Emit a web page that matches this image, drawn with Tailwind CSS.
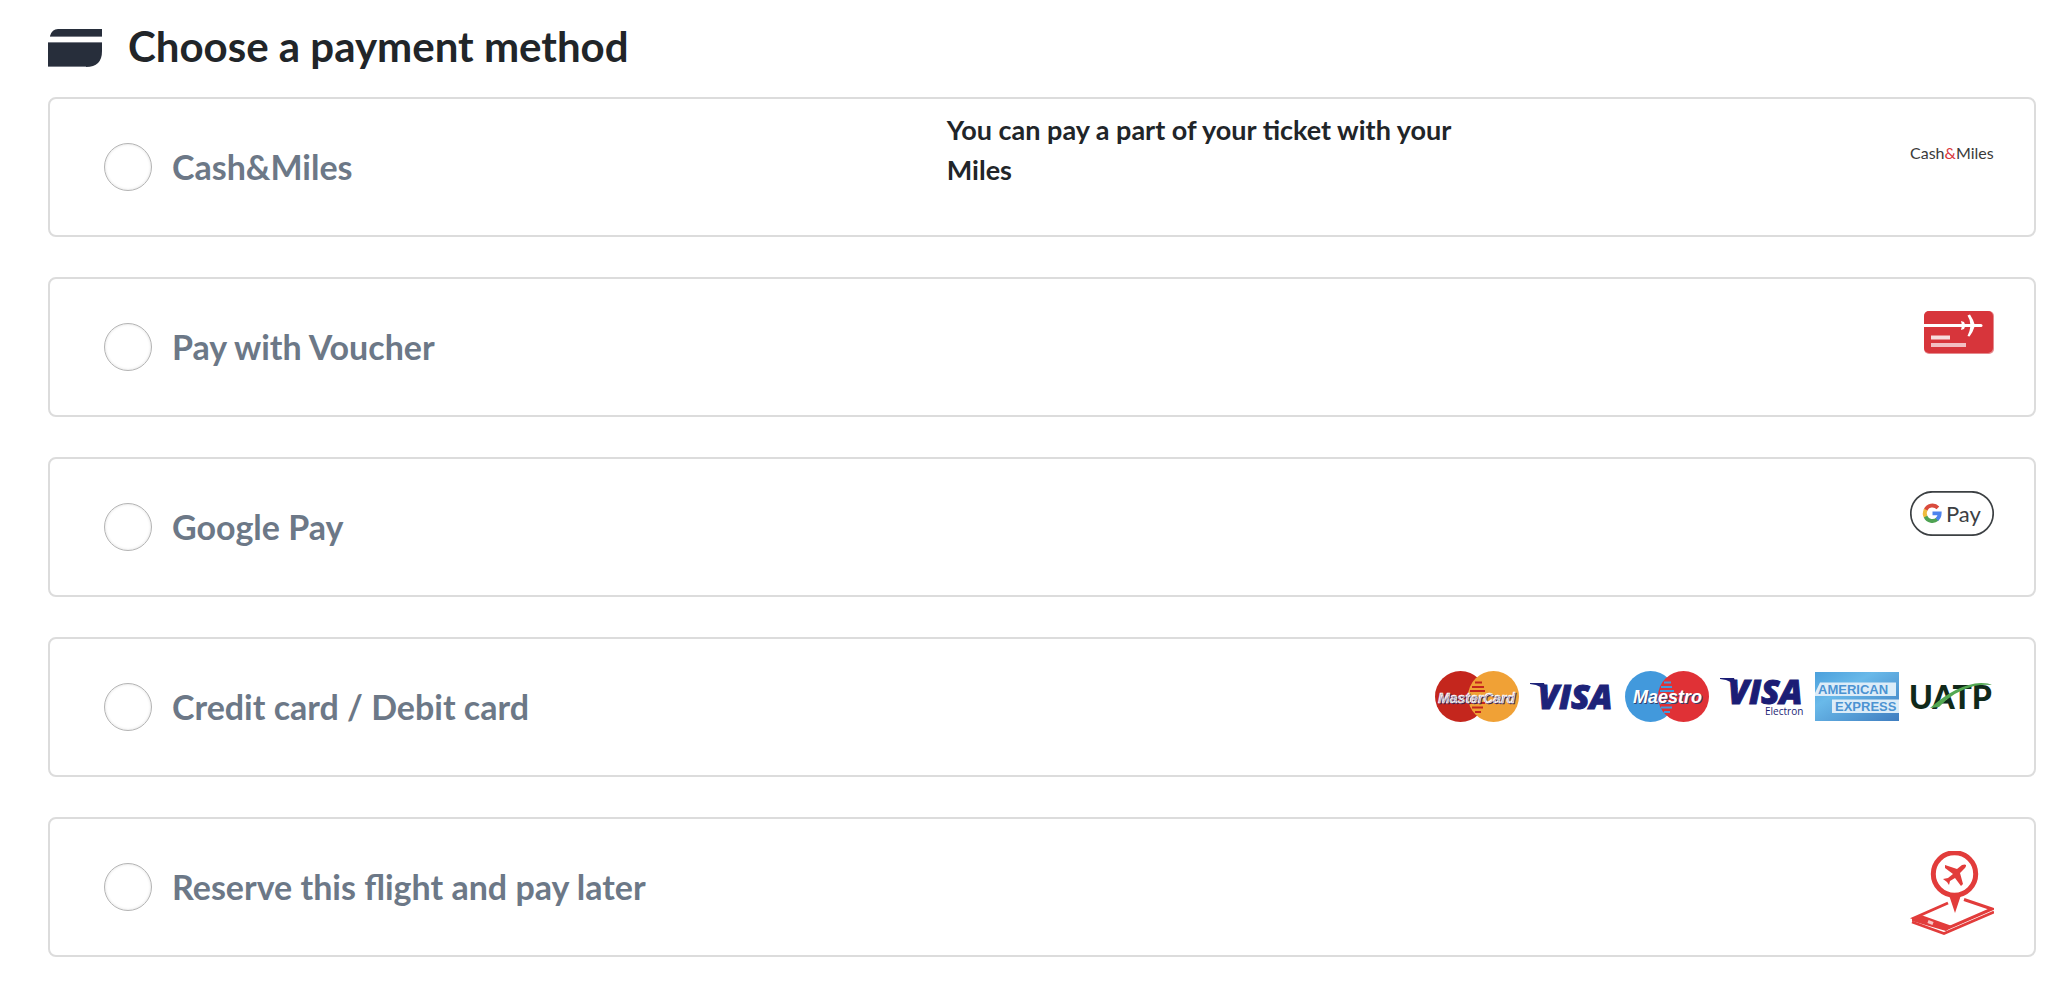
<!DOCTYPE html>
<html lang="en">
<head>
<meta charset="utf-8">
<meta name="viewport" content="width=device-width, initial-scale=1">
<title>Choose a payment method</title>
<script src="https://cdn.jsdelivr.net/npm/@tailwindcss/browser@4"></script>
</head>
<body class="bg-white font-['Lato','Open_Sans',sans-serif] text-[#212529]">
<main class="pt-4 pr-6 pb-7 pl-12">
  <header class="mb-[17px] flex h-16 items-center gap-[26px]">
    <svg class="h-[38px] w-[54px] shrink-0" viewBox="0 0 54 38" fill="#272e3b" aria-hidden="true">
      <path d="M10 0H54V7H2Q4 0 10 0Z"/>
      <path d="M0 14H54V22Q54 38 38 38H0Z"/>
      <path d="M2 7.500H54M0 13.500H54M0 37.500H38" stroke="#777b85" stroke-width="1"/>
    </svg>
    <h1 class="pb-1 text-[42px] leading-[48px] font-bold">Choose a payment method</h1>
  </header>

  <form class="flex flex-col gap-10">
    <section class="flex min-h-[140px] rounded-lg border-2 border-[#dcdcdc]">
      <label for="miles" class="flex w-[45%] items-center gap-5 pl-[54px] text-[34px] leading-10 font-bold text-[#6c7887]">
        <input id="miles" type="radio" name="payment" class="size-12 shrink-0 appearance-none rounded-full border border-[#b4b4b4] bg-white shadow-[inset_0_0_3px_#dddddd] checked:border-[14px] checked:border-[#6c7887]">
        Cash&amp;Miles
      </label>
      <p class="w-[28%] pt-[11px] pl-1 text-[27px] leading-10 font-bold">You can pay a part of your ticket with your Miles</p>
      <div class="ml-auto flex items-start pt-8 pr-10">
        <svg class="h-[44px] w-[84px]" viewBox="0 0 84 44" role="img" aria-label="Cash&amp;Miles">
          <text x="0" y="28" font-family="Lato" font-size="16" fill="#3a3a3a">Cash<tspan fill="#d9363c">&amp;</tspan>Miles</text>
        </svg>
      </div>
    </section>

    <section class="flex min-h-[140px] rounded-lg border-2 border-[#dcdcdc]">
      <label for="voucher" class="flex w-[45%] items-center gap-5 pl-[54px] text-[34px] leading-10 font-bold text-[#6c7887]">
        <input id="voucher" type="radio" name="payment" class="size-12 shrink-0 appearance-none rounded-full border border-[#b4b4b4] bg-white shadow-[inset_0_0_3px_#dddddd] checked:border-[14px] checked:border-[#6c7887]">
        Pay with Voucher
      </label>
      <div class="ml-auto flex items-start pt-8 pr-10">
        <svg class="h-[43px] w-[70px]" viewBox="0 0 70 43" role="img" aria-label="Voucher">
          <rect width="70" height="43" rx="5" fill="#e58a8e"/>
          <rect width="69" height="42" rx="5" fill="#d7353b"/>
          <path d="M0 14.500H57" stroke="#fff" stroke-width="3" stroke-linecap="round"/>
          <path d="M43.500 4.500L46 3.500Q49 8 51 14.500Q49 21 45.500 25.500L43.500 25Q46 20 46.500 14.500Q46.500 9 43.500 4.500ZM37 10L40 11L41.500 14.500L40 18L37 19L38 14.500Z" fill="#fff"/>
          <path d="M7 26.500H26" stroke="#f7dcdd" stroke-width="4"/>
          <path d="M7 34H42" stroke="#f2bfc2" stroke-width="4"/>
        </svg>
      </div>
    </section>

    <section class="flex min-h-[140px] rounded-lg border-2 border-[#dcdcdc]">
      <label for="gpay" class="flex w-[45%] items-center gap-5 pl-[54px] text-[34px] leading-10 font-bold text-[#6c7887]">
        <input id="gpay" type="radio" name="payment" class="size-12 shrink-0 appearance-none rounded-full border border-[#b4b4b4] bg-white shadow-[inset_0_0_3px_#dddddd] checked:border-[14px] checked:border-[#6c7887]">
        Google Pay
      </label>
      <div class="ml-auto flex items-start pt-8 pr-10">
        <svg class="h-[45px] w-[84px]" viewBox="0 0 84 45" role="img" aria-label="Google Pay">
          <rect x="0.800" y="0.800" width="82.400" height="43.400" rx="21.700" fill="#fff" stroke="#3c4043" stroke-width="1.700"/>
          <g fill="none" stroke-width="3.800">
            <path d="M27.900 16.800A7.600 7.600 0 0 0 15.400 19.400" stroke="#d94b3d"/>
            <path d="M15.800 18.600A7.600 7.600 0 0 0 15.800 26.200" stroke="#efbc3e"/>
            <path d="M15.500 25.600A7.600 7.600 0 0 0 27.400 28.100" stroke="#4fa353"/>
            <path d="M26.900 28.500Q29.600 26.200 29.700 22.300H22.500" stroke="#4d84ee"/>
          </g>
          <text x="36" y="31" font-family="Lato" font-size="22" fill="#3c4043">Pay</text>
        </svg>
      </div>
    </section>

    <section class="flex min-h-[140px] rounded-lg border-2 border-[#dcdcdc]">
      <label for="card" class="flex w-[45%] items-center gap-5 pl-[54px] text-[34px] leading-10 font-bold text-[#6c7887]">
        <input id="card" type="radio" name="payment" class="size-12 shrink-0 appearance-none rounded-full border border-[#b4b4b4] bg-white shadow-[inset_0_0_3px_#dddddd] checked:border-[14px] checked:border-[#6c7887]">
        Credit card / Debit card
      </label>
      <div class="ml-auto flex items-start gap-[11px] pt-8 pr-10">
        <svg class="h-[51px] w-[84px]" viewBox="0 0 84 51" role="img" aria-label="MasterCard">
          <circle cx="25.500" cy="25.500" r="25.500" fill="#c4261d"/>
          <circle cx="58.500" cy="25.500" r="25.500" fill="#f0a136"/>
          <path d="M40 11.500H47M37 16H49M35 20H50M35 32H50M37 36.500H48M40 41H46" stroke="#c4261d" stroke-width="2"/>
          <text class="[text-shadow:1px_1px_0_#3d2451]" x="3" y="32" font-family="Liberation Sans" font-size="14" font-weight="700" font-style="italic" fill="#fff" stroke="#fff" stroke-width="0.400">MasterCard</text>
        </svg>
        <svg class="h-[51px] w-[84px]" viewBox="0 0 84 51" role="img" aria-label="Visa">
          <text x="8" y="38" font-family="Open Sans" font-size="34" font-weight="800" font-style="italic" fill="#1d2379" stroke="#1d2379" stroke-width="1">VISA</text>
          <path d="M0 12H14L18 24Q13 14 0 13Z" fill="#1d2379"/>
        </svg>
        <svg class="h-[51px] w-[84px]" viewBox="0 0 84 51" role="img" aria-label="Maestro">
          <circle cx="25.500" cy="25.500" r="25.500" fill="#4299dc"/>
          <circle cx="58.500" cy="25.500" r="25.500" fill="#e03136"/>
          <path d="M39 11.500H46M36 16H47M35 20H49M35 32H49M36 36.500H47M39 41H45" stroke="#4299dc" stroke-width="2"/>
          <text class="[text-shadow:1px_1px_0_#33406f]" x="8" y="32" font-family="Liberation Sans" font-size="18" font-weight="700" font-style="italic" fill="#fff">Maestro</text>
        </svg>
        <svg class="h-[51px] w-[84px]" viewBox="0 0 84 51" role="img" aria-label="Visa Electron">
          <text x="8" y="33" font-family="Open Sans" font-size="34" font-weight="800" font-style="italic" fill="#1b1d75" stroke="#1b1d75" stroke-width="1">VISA</text>
          <path d="M0 7H14L18 19Q13 9 0 8Z" fill="#1b1d75"/>
          <text x="45" y="44" font-family="Open Sans" font-size="10" fill="#1b1d75">Electron</text>
        </svg>
        <svg class="h-[51px] w-[84px]" viewBox="0 0 84 51" role="img" aria-label="American Express">
          <defs>
            <linearGradient id="amex" x1="0" y1="0" x2="1" y2="1">
              <stop offset="0" stop-color="#4ba0dc"/><stop offset="0.350" stop-color="#69b9e9"/><stop offset="1" stop-color="#3f7dc0"/>
            </linearGradient>
          </defs>
          <rect y="1" width="84" height="49" fill="url(#amex)"/>
          <path d="M5 11.500H81V25H0V22ZM17 28.500H84V42H17Z" fill="#dcecf8"/>
          <g font-family="Liberation Sans" font-size="13" font-weight="700" fill="#4b93d2">
            <text x="3" y="23">AMERICAN</text>
            <text x="20" y="40">EXPRESS</text>
          </g>
        </svg>
        <svg class="h-[51px] w-[84px]" viewBox="0 0 84 51" role="img" aria-label="UATP">
          <text x="-1" y="38" font-family="Lato" font-size="32" font-weight="900" fill="#10291a">UATP</text>
          <path d="M20 37Q47 13 71 12Q79 12 82 14Q73 13 64 15Q44 20 29 36Z" fill="#53a852"/>
        </svg>
      </div>
    </section>

    <section class="flex min-h-[140px] rounded-lg border-2 border-[#dcdcdc]">
      <label for="reserve" class="flex w-[45%] items-center gap-5 pl-[54px] text-[34px] leading-10 font-bold text-[#6c7887]">
        <input id="reserve" type="radio" name="payment" class="size-12 shrink-0 appearance-none rounded-full border border-[#b4b4b4] bg-white shadow-[inset_0_0_3px_#dddddd] checked:border-[14px] checked:border-[#6c7887]">
        Reserve this flight and pay later
      </label>
      <div class="ml-auto flex items-start pt-8 pr-10">
        <svg class="h-[84px] w-[84px]" viewBox="0 0 84 84" role="img" aria-label="Reserve and pay later">
          <g fill="none" stroke="#e23c3b">
            <circle cx="44.500" cy="23" r="21.200" stroke-width="5"/>
            <path d="M38 52L4 67L36 78L82 58L54 48.500" stroke-width="3"/>
            <path d="M2 71L34 82.500L84 61" stroke-width="2.600"/>
          </g>
          <path d="M39 44H51L45 62ZM2 67L11 64L42 75L36 80L2 70Z" fill="#e23c3b"/>
          <path d="M18 70.500L23 72.500" stroke="#f6c6c6" stroke-width="3"/>
          <path d="M35 14L47 18L52 14Q55 13 56 14Q56.500 16 53 19L50 22L53 33L51 35L45 27L40 30L39 34L37 31L33 28L38 27L43 23L35 17Z" fill="#e23c3b"/>
        </svg>
      </div>
    </section>
  </form>
</main>
</body>
</html>
